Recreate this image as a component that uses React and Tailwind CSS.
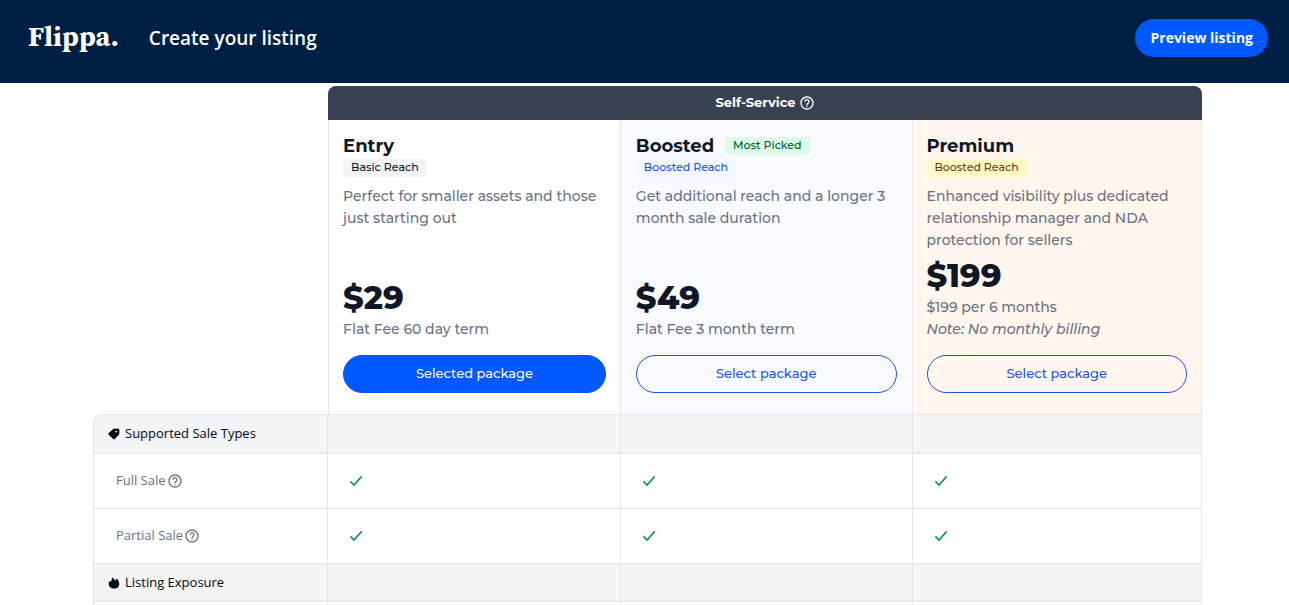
import { MdHelpOutline } from "react-icons/md";

const packages = [
  {
    name: "Entry",
    reach: "Basic Reach",
    reachStyle: "bg-gray-100 text-gray-900",
    text: "Perfect for smaller assets and those just starting out",
    price: "$29",
    term: "Flat Fee 60 day term",
    selected: true,
    cell: "border-l pl-[14px] pr-[14px]",
  },
  {
    name: "Boosted",
    tag: "Most Picked",
    reach: "Boosted Reach",
    reachStyle: "bg-[#f3f8ff] text-[#1a56db]",
    text: "Get additional reach and a longer 3 month sale duration",
    price: "$49",
    term: "Flat Fee 3 month term",
    cell: "bg-[#f8faff] pl-[15px] pr-[15px]",
  },
  {
    name: "Premium",
    reach: "Boosted Reach",
    reachStyle: "bg-[#fef9c3] text-[#723b13]",
    text: "Enhanced visibility plus dedicated relationship manager and NDA protection for sellers",
    price: "$199",
    term: "$199 per 6 months",
    note: "Note: No monthly billing",
    cell: "bg-[#fff6ed] pl-[14px] pr-[14px]",
  },
];

function CheckIcon() {
  return (
    <svg viewBox="0 0 16 16" className="size-4" fill="none" stroke="#0e9064" strokeWidth="1.6" role="img" aria-label="Included">
      <path d="M2.4 8.4 6 12.1 13.7 3.4" />
    </svg>
  );
}

function TagIcon() {
  return (
    <svg viewBox="0 0 12 12" className="size-3 shrink-0" fill="currentColor" aria-hidden="true">
      <path
        fillRule="evenodd"
        d="M6.3.8h4c.6 0 1 .4 1 1v4c0 .4-.1.7-.4 1L6.8 11c-.5.5-1.1.5-1.6 0L.7 6.7c-.5-.5-.5-1.1 0-1.6L5 1.2c.4-.3.8-.4 1.3-.4Zm2 1.9a.9.9 0 1 0 0 1.8.9.9 0 0 0 0-1.8Z"
      />
    </svg>
  );
}

function FlameIcon() {
  return (
    <svg viewBox="0 0 12 12" className="size-3 shrink-0" fill="currentColor" aria-hidden="true">
      <path d="M4 .5C5.8 1.3 6.7 2.4 7.1 3.7 7.8 3.2 8.1 2.5 8.1 1.6 10.1 2.9 11.3 4.8 11.3 6.9c0 2.8-2.3 4.6-5.2 4.6S.7 9.6.7 6.9C.7 5.8 1 4.9 1.5 4.1l1 1C3.5 3.8 4 2.3 4 .5Z" />
    </svg>
  );
}

function Package({ item }) {
  return (
    <div className="flex h-[294px] flex-col items-start pt-4 pb-[21px]">
      <div className="flex items-center gap-[11px] text-[18px] leading-[20px] font-bold text-gray-900">
        <h2>{item.name}</h2>
        {item.tag && (
          <span className="rounded bg-[#dcfce7] px-2 pb-0.5 text-[11px] leading-[16px] font-medium text-[#03543f]">{item.tag}</span>
        )}
      </div>
      <span className={`mt-[3px] rounded px-2 pb-0.5 text-[11px] leading-[16px] font-medium ${item.reachStyle}`}>{item.reach}</span>
      <p className="mt-2 text-[14px] leading-[22px] font-medium text-gray-500">{item.text}</p>
      <div className="mt-auto text-[32px] leading-[40px] font-extrabold text-gray-900">{item.price}</div>
      <p className="text-[14px] leading-[22px] font-medium text-gray-500">{item.term}</p>
      {item.note && <p className="text-[14px] leading-[22px] font-medium text-gray-500 italic">{item.note}</p>}
      <button
        type="button"
        className={`mt-[15px] h-[38px] w-full shrink-0 rounded-full border text-[13px] font-medium ${
          item.selected ? "border-[#0059ff] bg-[#0059ff] text-white" : "border-[#1a56db] text-[#1a56db]"
        }`}
      >
        {item.selected ? "Selected package" : "Select package"}
      </button>
    </div>
  );
}

function SectionRow({ icon, title, first }) {
  const top = first ? "h-10 border-t" : "h-[38px]";
  return (
    <tr className="text-gray-900">
      <th
        scope="row"
        className={`border-x border-b border-gray-200 bg-gray-100 pl-[14px] text-left font-medium text-gray-950 ${top} ${first ? "rounded-tl-lg" : ""}`}
      >
        <span className="flex items-center gap-[5px]">
          {icon}
          {title}
        </span>
      </th>
      {packages.map((p) => (
        <td key={p.name} className={`border-r border-b border-gray-200 bg-gray-100 ${top}`} />
      ))}
    </tr>
  );
}

function FeatureRow({ title }) {
  return (
    <tr>
      <th scope="row" className="h-[55px] border-x border-b border-gray-200 pl-[22px] text-left font-normal text-gray-500">
        <span className="flex items-center gap-px">
          {title}
          <MdHelpOutline className="size-4" />
        </span>
      </th>
      {packages.map((p) => (
        <td key={p.name} className="h-[55px] border-r border-b border-gray-200 pl-5">
          <CheckIcon />
        </td>
      ))}
    </tr>
  );
}

export default function App() {
  return (
    <div className="h-screen overflow-hidden bg-white font-['Open_Sans',sans-serif]">
      <header className="flex items-start justify-between bg-[#001f44] pt-[19px] pr-[21px] pb-[26px] pl-7 text-white">
        <div className="flex h-[38px] items-center gap-[30px]">
          <a href="#" className="pb-1 font-['Source_Serif_4','Source_Serif_Pro','Liberation_Serif',serif] text-[28px] leading-[38px] font-bold">
            Flippa.
          </a>
          <h1 className="text-[19px] font-semibold">Create your listing</h1>
        </div>
        <button type="button" className="h-[38px] rounded-full bg-[#0059ff] px-[15px] pb-0.5 text-[14px] font-bold">
          Preview listing
        </button>
      </header>
      <main className="pt-[3px] pr-[87px] pl-[93px]">
        <table className="w-full table-fixed border-separate border-spacing-0 text-[13px]">
          <colgroup>
            <col className="w-[21.2%]" />
            <col className="w-[26.4%]" />
            <col className="w-[26.3%]" />
            <col className="w-[26.1%]" />
          </colgroup>
          <thead className="font-['Montserrat','Inter',sans-serif]">
            <tr>
              <td rowSpan={2} />
              <th scope="colgroup" colSpan={3} className="h-[34px] rounded-t-lg bg-[#374151] text-[13px] font-bold text-white">
                <span className="flex items-center justify-center gap-[3px]">
                  Self-Service
                  <MdHelpOutline className="size-4" />
                </span>
              </th>
            </tr>
            <tr>
              {packages.map((p) => (
                <th key={p.name} scope="col" className={`border-r border-gray-200 text-left align-top font-normal ${p.cell}`}>
                  <Package item={p} />
                </th>
              ))}
            </tr>
          </thead>
          <tbody>
            <SectionRow first icon={<TagIcon />} title="Supported Sale Types" />
            <FeatureRow title="Full Sale" />
            <FeatureRow title="Partial Sale" />
            <SectionRow icon={<FlameIcon />} title="Listing Exposure" />
            <tr>
              <td className="h-10 border-x border-gray-200" />
              {packages.map((p) => (
                <td key={p.name} className="h-10 border-r border-gray-200" />
              ))}
            </tr>
          </tbody>
        </table>
      </main>
    </div>
  );
}
